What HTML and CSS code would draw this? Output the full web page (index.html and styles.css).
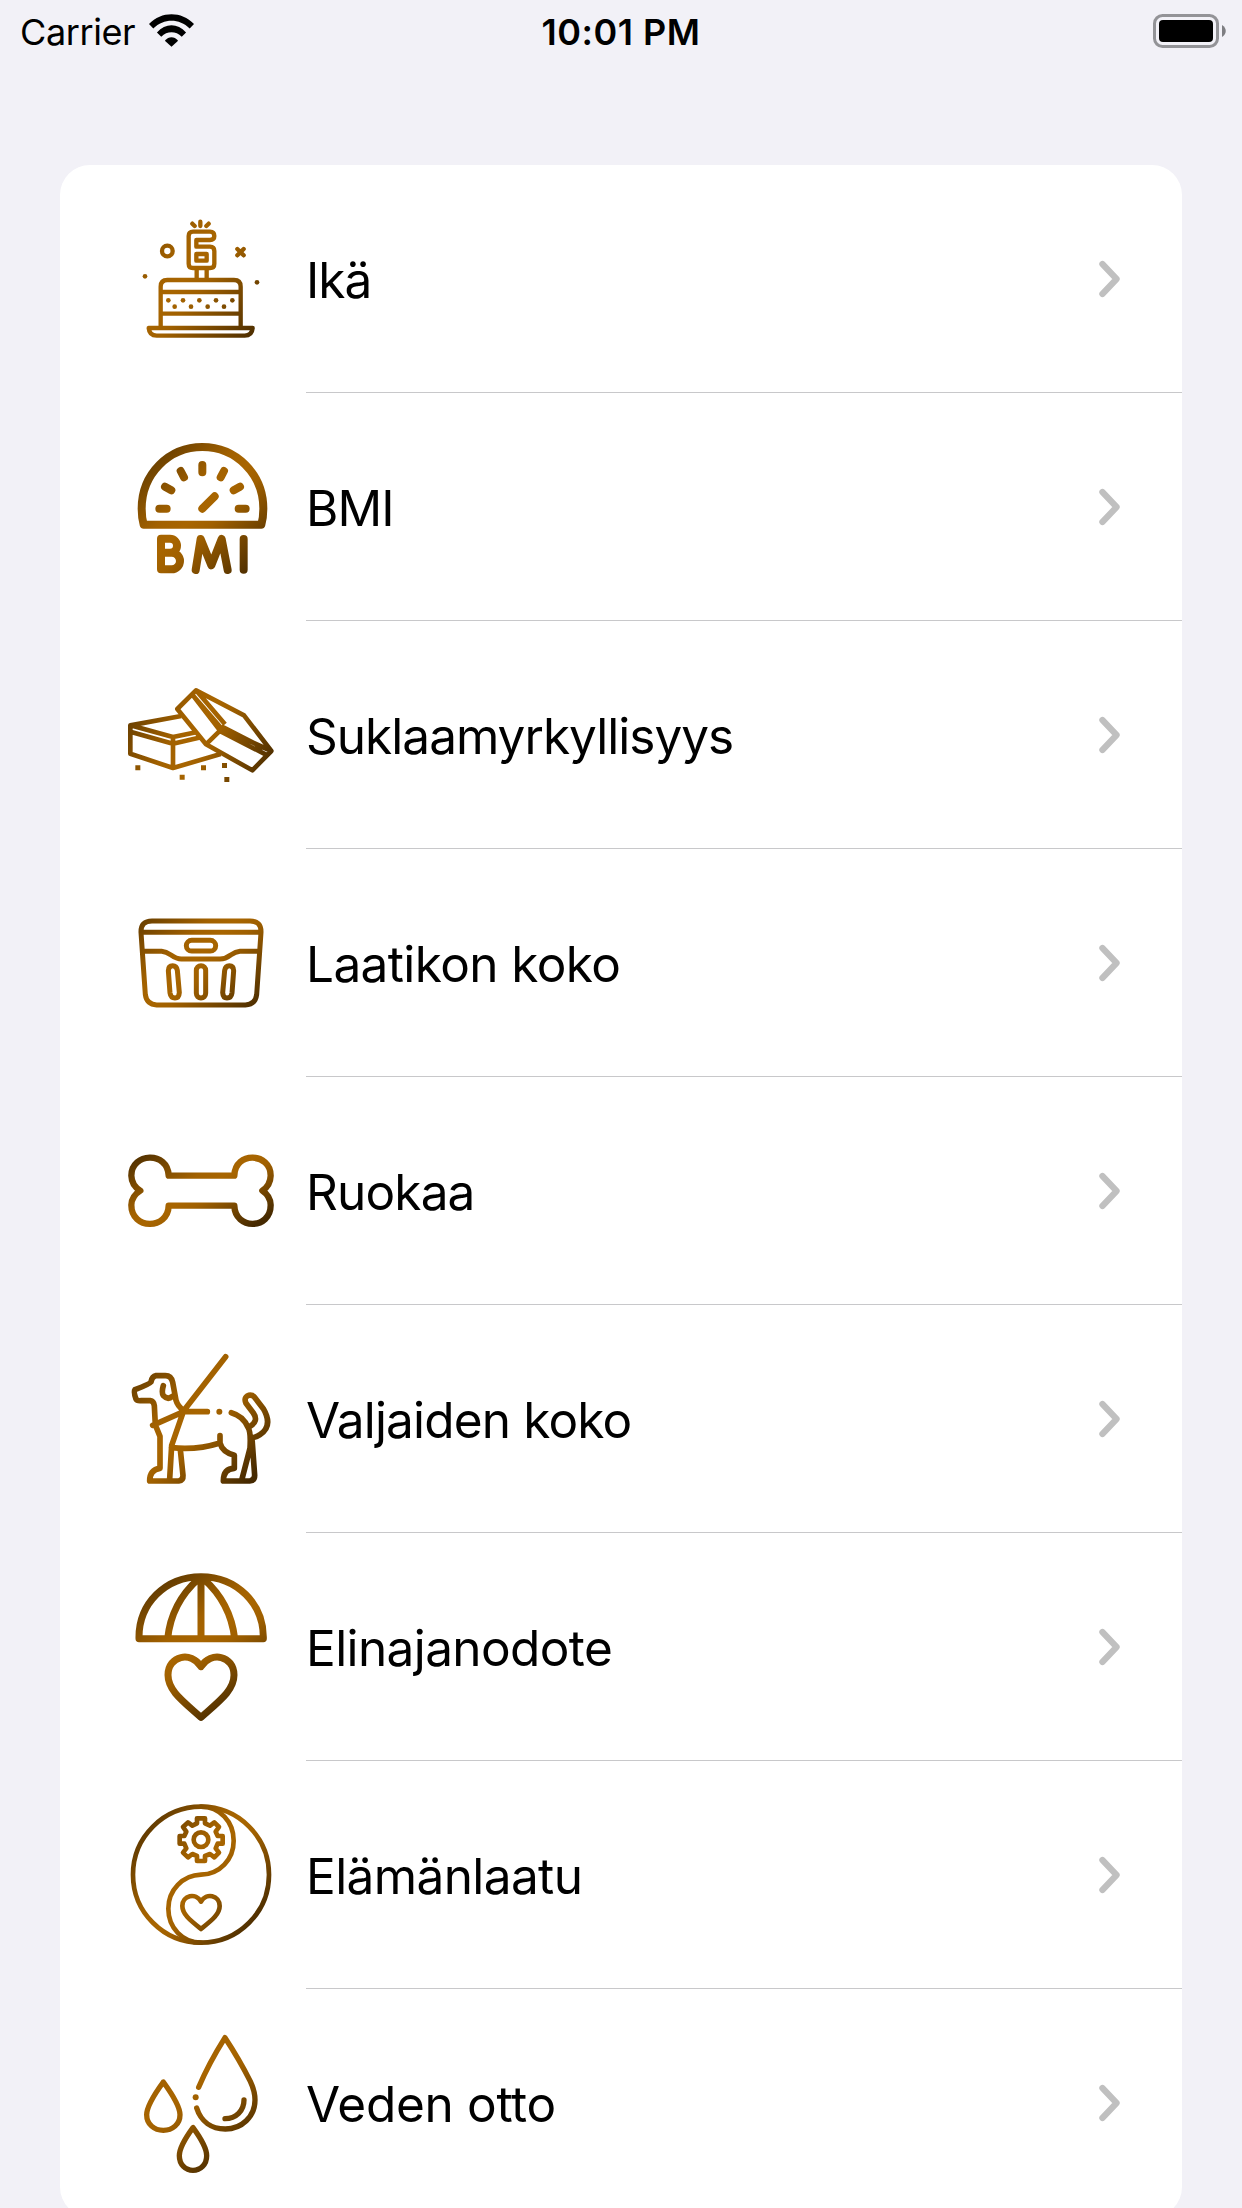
FILE: index.html
```html
<!DOCTYPE html>
<html lang="fi">
<head>
<meta charset="utf-8">
<title>Laskurit</title>
<link rel="stylesheet" href="styles.css">
</head>
<body>
<svg class="defs" width="0" height="0" aria-hidden="true">
  <defs>
    <linearGradient id="bronze" gradientUnits="userSpaceOnUse">
      <stop offset="0" stop-color="#573400"/>
      <stop offset=".38" stop-color="#a26100"/>
      <stop offset=".5" stop-color="#a86500"/>
      <stop offset=".6" stop-color="#a06000"/>
      <stop offset="1" stop-color="#452900"/>
    </linearGradient>
    <linearGradient id="g-cake" href="#bronze" x1="-40" y1="60" x2="410" y2="430"/>
    <linearGradient id="g-bmi" href="#bronze" x1="60" y1="60" x2="420" y2="430"/>
    <linearGradient id="g-choc" href="#bronze" x1="0" y1="90" x2="450" y2="330"/>
    <linearGradient id="g-crate" href="#bronze" x1="60" y1="0" x2="400" y2="350"/>
    <linearGradient id="g-bone" href="#bronze" x1="150" y1="30" x2="330" y2="330"/>
    <linearGradient id="g-dog" href="#bronze" x1="40" y1="50" x2="400" y2="410"/>
    <linearGradient id="g-life" href="#bronze" x1="100" y1="50" x2="370" y2="440"/>
    <linearGradient id="g-yin" href="#bronze" x1="60" y1="100" x2="425" y2="400"/>
    <linearGradient id="g-drop" href="#bronze" x1="20" y1="10" x2="360" y2="410"/>
    <symbol id="chevron" viewBox="0 0 22 38"><path d="M3.4 4 17.6 19 3.4 34"/></symbol>
  </defs>
</svg>

<header class="status">
  <div class="status-left">
    <span class="carrier">Carrier</span>
    <svg class="wifi" viewBox="448 39 136 98">
      <path d="M448 68C486 29 546 29 584 68L571 82C539 51 493 51 461 82Z"/>
      <path d="M472 94C498 65 534 65 560 94L547 107C529 89 503 89 485 107Z"/>
      <path d="M496 119C508 105 524 105 536 119L516 137Z"/>
    </svg>
  </div>
  <span class="clock">10:01 PM</span>
  <svg class="battery" viewBox="0 0 73 34">
    <rect x="1.5" y="1.5" width="63" height="31" rx="8" fill="none" stroke="#939397" stroke-width="3"/>
    <rect x="6" y="6" width="54" height="22" rx="4"/>
    <path d="M69 11C74 14 74 20 69 23Z" fill="#7e7e82"/>
  </svg>
</header>

<main class="card">
  <a class="row">
    <svg class="icon cake" viewBox="0 -18 486 510">
      <path d="M122 378V260Q122 240 142 240H342Q362 240 362 260V378M122 276H362M122 341H362M86 384H398Q396 407 374 407H110Q88 407 86 384ZM230 208V238M260 208V238"/>
      <path d="M219 95H270Q283 95 283 108Q283 120 270 120H229V140H270Q283 140 283 153V191Q283 204 270 204H219Q206 204 206 191V108Q206 95 219 95ZM229 162H260V182H229Z"/>
      <circle cx="142" cy="153" r="16"/>
      <path d="M217 71 224 78M241 65V78M266 71 259 78M352 147 371 166M371 147 352 166"/>
      <g class="solid"><circle cx="75" cy="229" r="7"/><circle cx="411" cy="247" r="7"/><circle cx="145" cy="301" r="7"/><circle cx="189" cy="301" r="7"/><circle cx="238" cy="301" r="7"/><circle cx="288" cy="301" r="7"/><circle cx="337" cy="301" r="7"/><circle cx="164" cy="320" r="7"/><circle cx="213" cy="320" r="7"/><circle cx="263" cy="320" r="7"/><circle cx="312" cy="320" r="7"/></g>
    </svg>
    <span class="label tight">Ikä</span><svg class="chevron"><use href="#chevron"/></svg>
  </a>
  <a class="row">
    <svg class="icon bmi" viewBox="0 -24 486 510">
      <path d="M71 284H424Q430 262 430 236C430 132 348 51 247 51S65 132 65 236Q65 262 71 284Z"/>
      <path d="M118 236H140M356 236H377M135 170 154 181M182 123 192 142M247 105V127M312 123 302 142M360 170 341 181M247 236 284 199"/>
      <path d="M123 326V418H155A23 23 0 0 0 155 368H123M123 326H150A21 21 0 0 1 150 368M227 420 242 327 274 406 305 327 323 420M371 327V419"/>
    </svg>
    <span class="label tight">BMI</span><svg class="chevron"><use href="#chevron"/></svg>
  </a>
  <a class="row">
    <svg class="icon choc" viewBox="0 -60 486 510">
      <path d="M184 138 31 166V251L159 294 302 252M31 166 159 201 232 186M31 185 159 221 243 202M159 203V292"/>
      <path d="M228 61 372 136 454 243 397 301 258 223 172 117ZM217 74 304 175 454 243M228 61 315 163M304 169 430 234M304 178 258 223M217 74 302 184 438 254"/>
      <path class="solid" d="M46 286h15v15h-15zM179 314h15v15h-15zM243 286h15v15h-15zM306 279h15v15h-15zM313 321h15v15h-15z"/>
    </svg>
    <span class="label tight">Suklaamyrkyllisyys</span><svg class="chevron"><use href="#chevron"/></svg>
  </a>
  <a class="row">
    <svg class="icon crate" viewBox="0 -66 486 510">
      <path d="M96 63H390Q424 63 423 97L410 284Q406 314 376 315H110Q80 313 76 284L63 97Q62 63 96 63ZM64 97H422M70 154H125Q138 155 153 165Q170 177 184 177H300Q316 177 332 165Q347 155 360 154H417"/>
      <rect x="199" y="121" width="88" height="32" rx="16"/>
      <rect x="229" y="197" width="28" height="97" rx="14"/>
      <path d="M145 212Q145 197 158 197Q170 197 172 211L178 278Q177 294 165 294Q152 294 150 279ZM341 212Q341 197 328 197Q316 197 314 211L308 278Q309 294 321 294Q334 294 336 279Z"/>
    </svg>
    <span class="label">Laatikon koko</span><svg class="chevron"><use href="#chevron"/></svg>
  </a>
  <a class="row">
    <svg class="icon bone" viewBox="0 -72 486 510">
      <path d="M146 137H343C345 63 452 67 452 137Q451 167 427 182Q451 198 452 225C452 300 345 300 343 227H146C144 300 34 300 34 225Q35 198 61 182Q35 167 34 137C34 67 144 63 146 137Z"/>
    </svg>
    <span class="label mid">Ruokaa</span><svg class="chevron"><use href="#chevron"/></svg>
  </a>
  <a class="row">
    <svg class="icon dog" viewBox="0 -18 486 510">
      <path d="M317 50 191 212 155 316 149 417M98 256 191 215H262M191 212Q173 199 168 181L158 127Q154 107 136 107H108Q96 109 93 126Q89 132 45 149Q40 155 48 177Q51 183 63 182H91Q101 183 103 197L106 255L120 289V385Q89 389 89 423H176Q190 421 189 406L181 329"/>
      <path d="M130 137Q124 157 130 167Q143 181 158 169M155 323Q230 331 300 309V287M300 309Q307 336 343 346V385Q310 386 310 423H389Q404 422 404 406L396 295M366 417 390 325Q393 276 384 262Q370 228 334 218M389 260Q417 243 400 219L378 190Q370 172 386 166Q397 164 403 171L430 206Q460 258 420 284Q407 293 391 294"/>
      <circle class="solid" cx="298" cy="215" r="9"/>
    </svg>
    <span class="label mid">Valjaiden koko</span><svg class="chevron"><use href="#chevron"/></svg>
  </a>
  <a class="row">
    <svg class="icon life" viewBox="0 6 486 510">
      <path d="M57 236H430C432 131 350 50 243 50S55 131 57 236ZM243 50V236M235 57Q154 129 143 236M251 57Q332 129 344 236"/>
      <path d="M243 320C214 272 144 287 144 345C144 391 187 422 243 472C299 422 342 391 342 345C342 287 272 272 243 320Z"/>
    </svg>
    <span class="label">Elinajanodote</span><svg class="chevron"><use href="#chevron"/></svg>
  </a>
  <a class="row">
    <svg class="icon yin" viewBox="0 0 486 510">
      <circle cx="243" cy="254" r="204"/>
      <path d="M243 50C300 50 341 96 341 152C341 209 299 252 243 254C188 256 145 300 145 356C145 413 188 458 243 458"/>
      <path d="M231 85H255V100L270 107 283 97 297 111 287 125 293 138H308V161H293L287 175 297 188 283 202 270 192 255 198V213H231V198L217 192 204 202 189 188 199 175 193 161H179V138H193L199 125 189 111 204 97 217 107 231 100Z"/>
      <circle cx="243" cy="149" r="22"/>
      <path d="M243 335C228 307 187 315 187 348C187 373 212 392 243 417C274 392 299 373 299 348C299 315 258 307 243 335Z"/>
    </svg>
    <span class="label">Elämänlaatu</span><svg class="chevron"><use href="#chevron"/></svg>
  </a>
  <a class="row">
    <svg class="icon drop" viewBox="0 -6 486 510">
      <path d="M236 202Q266 131 315 53Q359 120 391 184Q405 214 405 240C405 290 365 327 316 327C275 327 243 305 230 264M315 296C348 296 372 272 372 240"/>
      <path d="M130 186Q80 255 80 284C80 313 103 331 130 331S180 313 180 284Q180 255 130 186ZM219 323Q178 379 178 407C178 434 197 451 219 451S260 434 260 407Q260 379 219 323Z"/>
      <circle class="solid" cx="227" cy="232" r="9"/>
    </svg>
    <span class="label loose">Veden otto</span><svg class="chevron"><use href="#chevron"/></svg>
  </a>
</main>
</body>
</html>
```

FILE: styles.css
```css
* { box-sizing: border-box; }

html, body { height: 100%; }

body {
  margin: 0;
  background: #f2f1f7;
  color: #000;
  font-family: Inter, "Liberation Sans", sans-serif;
  overflow: hidden;
}

.defs { display: block; }

.status {
  display: grid;
  grid-template-columns: 1fr auto 1fr;
  align-items: center;
  height: 60px;
  padding: 0 16px 0 20px;
  font-size: 36px;
  line-height: 60px;
}

.status-left { display: flex; align-items: center; gap: 14px; }
.carrier { letter-spacing: -.4px; padding-top: 2px; }
.clock { font-weight: 600; letter-spacing: .5px; margin-left: -4px; padding-top: 2px; }
.wifi { width: 45px; height: 33px; margin-bottom: 2px; }
.battery { width: 73px; height: 34px; justify-self: end; }

.card {
  margin: 105px 60px 0;
  background: #fff;
  border-radius: 30px;
}

.row {
  display: grid;
  grid-template-columns: 162px 24px 1fr 22px 61px;
  grid-template-rows: 228px;
  align-items: center;
  padding-left: 60px;
}

.row:not(:last-child) {
  background: linear-gradient(#c8c8ca, #c8c8ca) 246px 227px / 876px 1px no-repeat;
}

.label {
  grid-column: 3;
  padding-top: 2px;
  font-size: 49.5px;
  line-height: 60px;
  letter-spacing: -.6px;
  white-space: nowrap;
}

.label.tight { letter-spacing: -.97px; }
.label.mid { letter-spacing: -.83px; }
.label.loose { letter-spacing: -.3px; font-feature-settings: "calt" 0, "liga" 0, "dlig" 0; }

.icon {
  width: 162px;
  height: 170px;
  fill: none;
  stroke-linecap: round;
  stroke-linejoin: round;
}

.cake { stroke: url(#g-cake); stroke-width: 13; }
.bmi { stroke: url(#g-bmi); stroke-width: 24; }
.choc { stroke: url(#g-choc); stroke-width: 14; stroke-linecap: butt; }
.crate { stroke: url(#g-crate); stroke-width: 15; }
.bone { stroke: url(#g-bone); stroke-width: 19; }
.dog { stroke: url(#g-dog); stroke-width: 17; }
.life { stroke: url(#g-life); stroke-width: 21; }
.yin { stroke: url(#g-yin); stroke-width: 14; }
.drop { stroke: url(#g-drop); stroke-width: 16; }

.solid { stroke: none; }
.cake .solid { fill: url(#g-cake); }
.choc .solid { fill: url(#g-choc); }
.dog .solid { fill: url(#g-dog); }
.drop .solid { fill: url(#g-drop); }

.chevron {
  width: 22px;
  height: 38px;
  fill: none;
  stroke: #c0c0c0;
  stroke-width: 6.2;
  stroke-linecap: round;
  stroke-linejoin: round;
}
```
